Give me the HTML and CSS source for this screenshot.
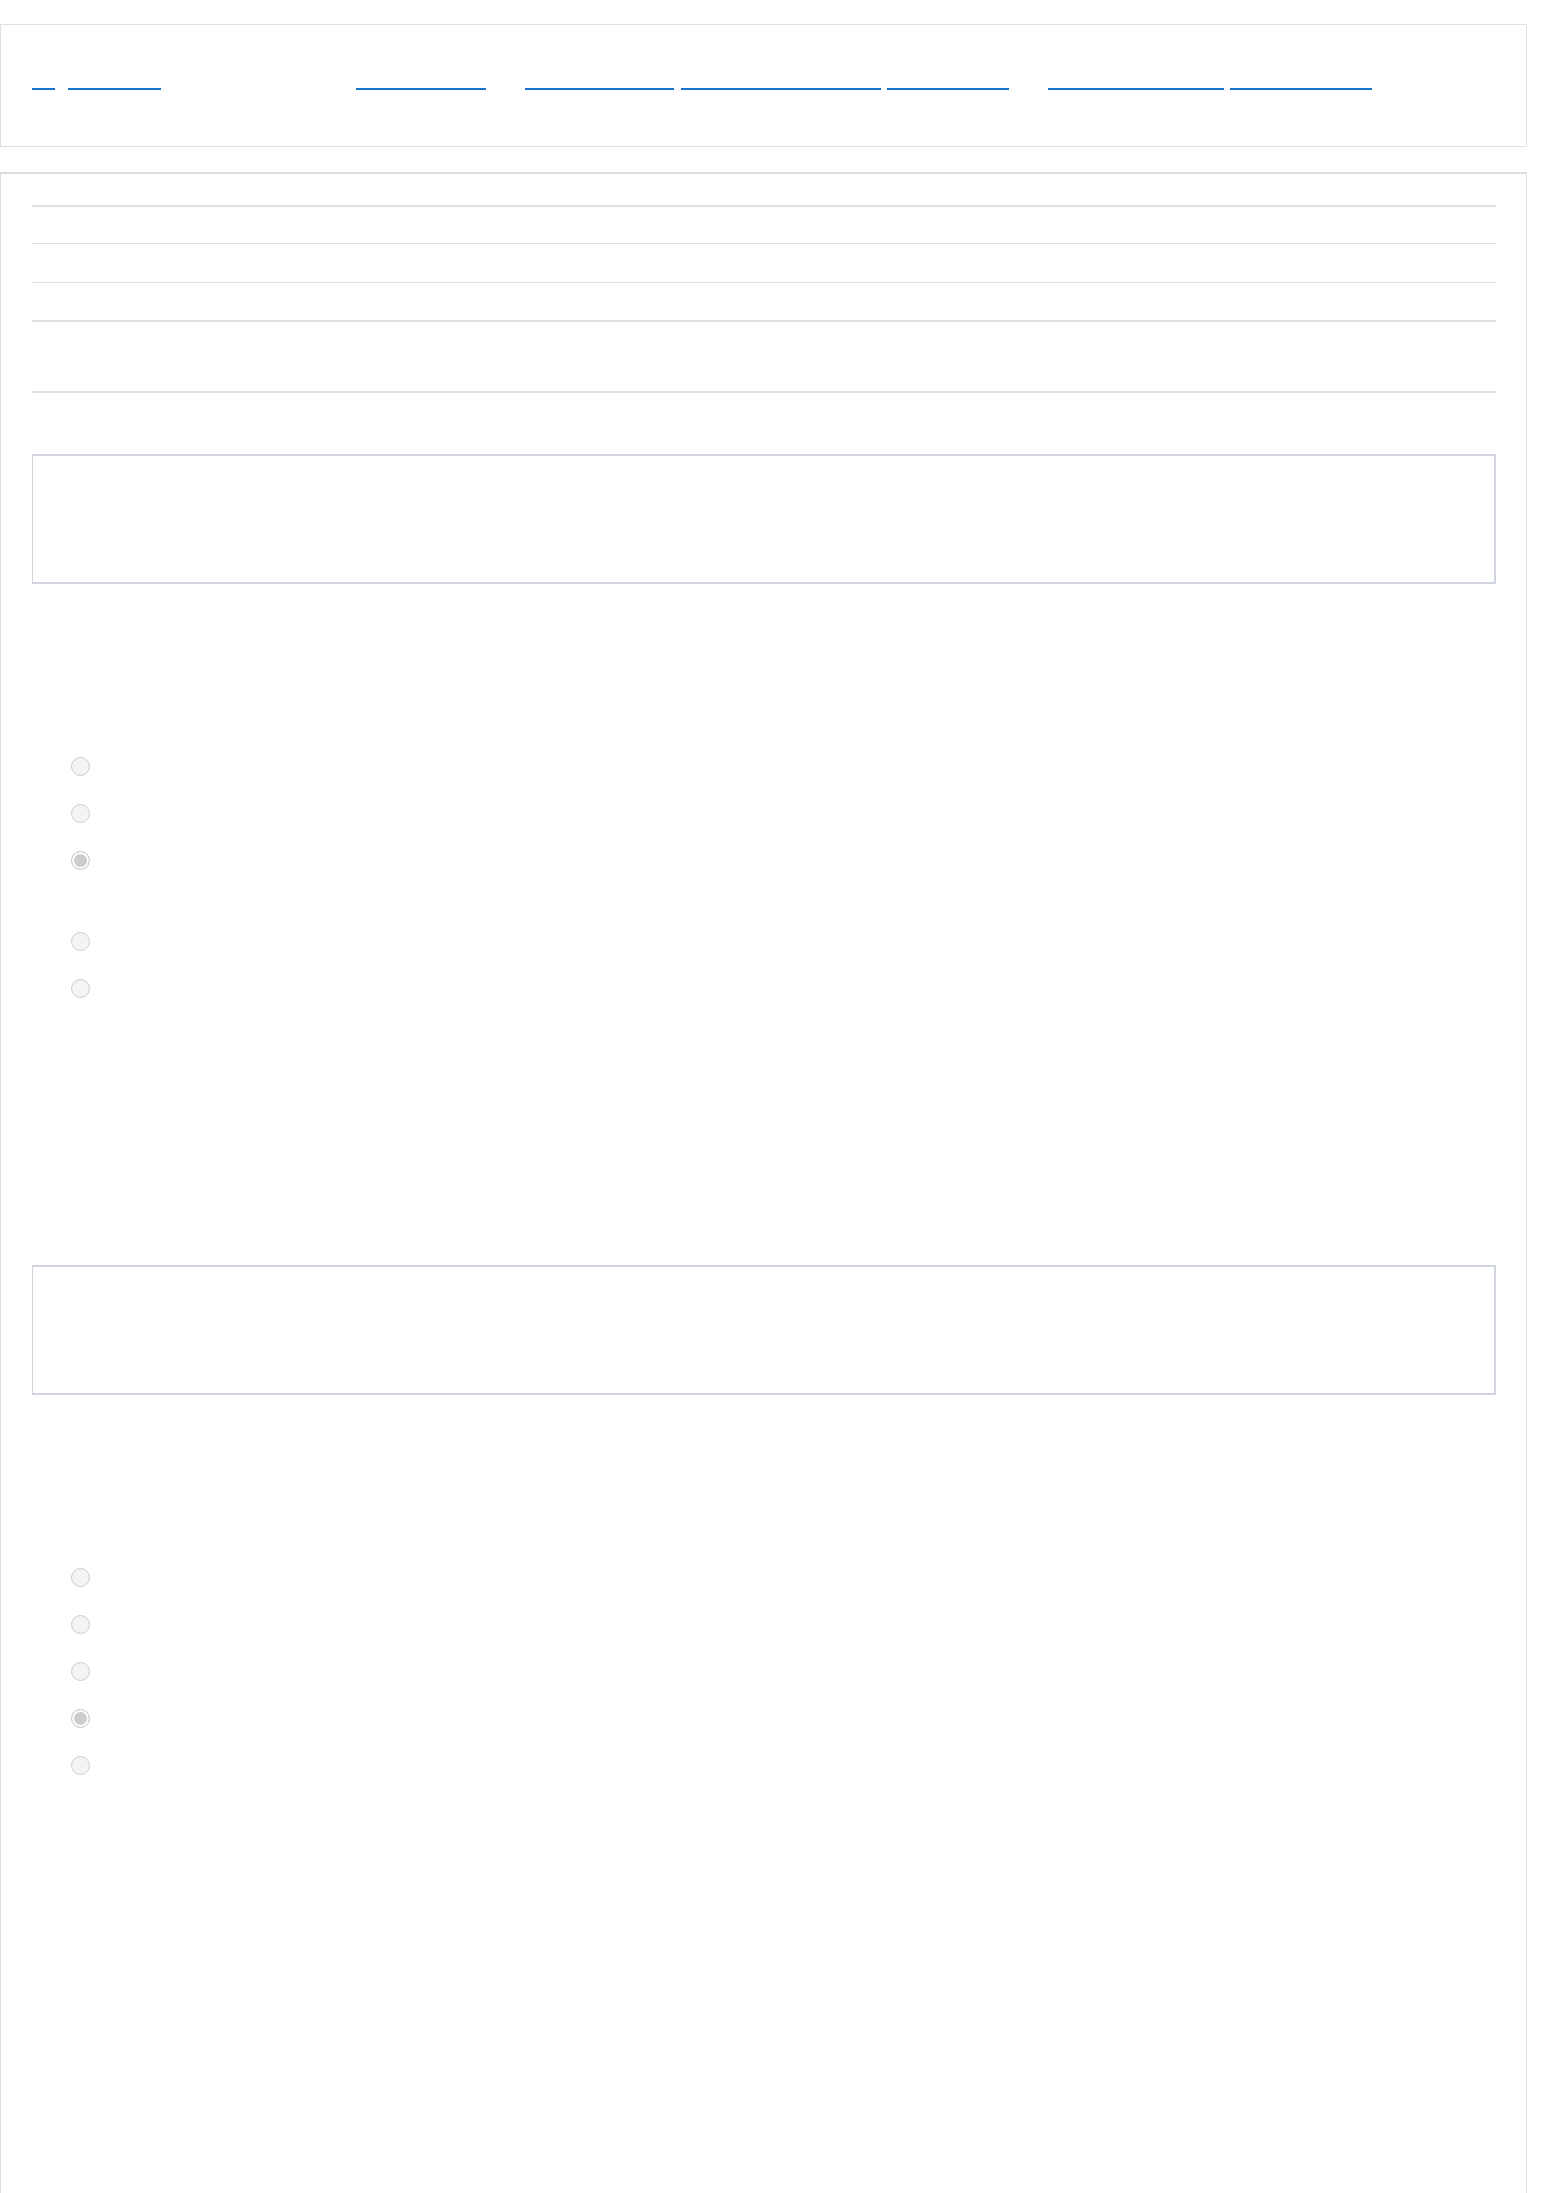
FILE: index.html
```html
<!DOCTYPE html>
<html lang="en">
<head>
    <meta charset="utf-8">
    <title>Quiz</title>
    <link rel="stylesheet" href="styles.css">
</head>
<body>
<div class="page">
    <!-- top navigation -->
    <div class="topbar">
        <div class="brand">
            <a class="nav-link w-logo" href="#">Q</a>
            <a class="nav-link w-brand" href="#">QuizBox</a>
        </div>
        <div class="nav-group first">
            <a class="nav-link w-home" href="#">Dashboard</a>
        </div>
        <div class="nav-group">
            <a class="nav-link w-courses" href="#">My courses</a>
            <a class="nav-link w-bank gap-wide" href="#">Question bank</a>
            <a class="nav-link w-results" href="#">Results</a>
        </div>
        <div class="nav-group">
            <a class="nav-link w-notif" href="#">Notifications</a>
            <a class="nav-link w-profile" href="#">My profile</a>
        </div>
    </div>

    <div class="card">
        <!-- quiz details table -->
        <div class="meta">
            <div class="meta-row thick"><span>Started on</span></div>
            <div class="meta-row"><span>State</span></div>
            <div class="meta-row"><span>Completed on</span></div>
            <div class="meta-row thick last"><span>Time taken</span></div>
        </div>

        <div class="question first">
            <div class="answer-box"><span>Question 1</span></div>
            <p class="prompt">Choose the correct answer.</p>
            <div class="options">
                <label class="option"><input type="radio" name="q1"><span>Option A</span></label>
                <label class="option"><input type="radio" name="q1"><span>Option B</span></label>
                <label class="option tall"><input type="radio" name="q1" checked><span>Option C</span></label>
                <label class="option"><input type="radio" name="q1"><span>Option D</span></label>
                <label class="option"><input type="radio" name="q1"><span>Option E</span></label>
            </div>
        </div>

        <div class="question">
            <div class="answer-box"><span>Question 2</span></div>
            <p class="prompt">Choose the correct answer.</p>
            <div class="options">
                <label class="option"><input type="radio" name="q2"><span>Option A</span></label>
                <label class="option"><input type="radio" name="q2"><span>Option B</span></label>
                <label class="option"><input type="radio" name="q2"><span>Option C</span></label>
                <label class="option"><input type="radio" name="q2" checked><span>Option D</span></label>
                <label class="option"><input type="radio" name="q2"><span>Option E</span></label>
            </div>
        </div>
    </div>
</div>
</body>
</html>
```

FILE: styles.css
```css
body {
    margin: 0;
    background-color: #ffffff;
    font-family: "Liberation Sans", Arial, sans-serif;
    font-size: 16px;
    color: transparent;
}

.page {
    width: 1527px;
    padding-top: 24px;
}

/* top bar */
.topbar {
    box-sizing: border-box;
    height: 123px;
    border: 1px solid #e0e0e0;
    padding: 41px 0 0 31px;
    display: flex;
    align-items: flex-start;
}

.brand {
    display: flex;
    gap: 13px;
}

.nav-group {
    display: flex;
    gap: 6px;
    margin-left: 39px;
}

.nav-group.first {
    margin-left: 195px;
}

.nav-link {
    display: block;
    height: 22px;
    border-bottom: 2px solid #1873cc;
    color: transparent;
    text-decoration: none;
    white-space: nowrap;
    overflow: hidden;
}

.w-logo { width: 23px; }
.w-brand { width: 93px; }
.w-home { width: 130px; }
.w-courses { width: 149px; }
.w-bank { width: 200px; }
.w-results { width: 122px; }
.w-notif { width: 176px; }
.w-profile { width: 142px; }

.gap-wide {
    margin-left: 1px;
}

/* main card */
.card {
    box-sizing: border-box;
    min-height: 2100px;
    margin-top: 25px;
    border: 1px solid #dedede;
    border-top-width: 2px;
    padding: 31px 30px 60px 31px;
}

.meta-row {
    border-top: 1px solid #dee2e6;
    height: 37px;
}

.meta-row:first-child {
    height: 36px;
}

.meta-row:nth-child(2) {
    height: 38px;
}

.meta-row.thick {
    border-top-width: 2px;
}

.meta-row.last {
    height: 69px;
    border-bottom: 2px solid #dee2e6;
}

.meta-row span {
    display: block;
    padding: 8px 0;
}

.question {
    margin-top: 253px;
}

.question.first {
    margin-top: 61px;
}

.answer-box {
    box-sizing: border-box;
    height: 130px;
    border: 2px solid #d0d5dd;
    border-left-width: 1px;
    padding: 12px;
}

.prompt {
    margin: 0;
    height: 159px;
    padding-top: 60px;
    box-sizing: border-box;
    line-height: 30px;
}

.option {
    display: flex;
    align-items: flex-start;
    height: 47px;
    padding-left: 39px;
    box-sizing: border-box;
}

.option.tall {
    height: 81px;
}

.option input {
    appearance: none;
    -webkit-appearance: none;
    width: 19px;
    height: 19px;
    margin: 14px 12px 0 0;
    border: 1.5px solid #cdcdcd;
    border-radius: 50%;
    background-color: #f4f4f4;
    box-sizing: border-box;
}

.option input:checked {
    background-color: #cccccc;
    box-shadow: inset 0 0 0 2px #ffffff;
}

.option span {
    line-height: 47px;
}
```
